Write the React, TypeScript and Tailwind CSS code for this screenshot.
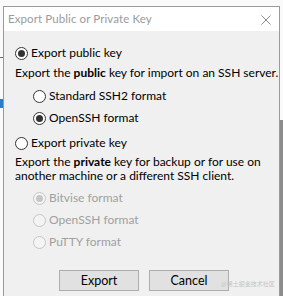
import type { ReactNode } from "react";

type RadioProps = {
  checked?: boolean;
  disabled?: boolean;
  children: ReactNode;
};

function Radio({ checked = false, disabled = false, children }: RadioProps) {
  return (
    <div className="flex h-[18px] items-center">
      <span
        className={
          disabled
            ? "flex h-[13px] w-[13px] shrink-0 items-center justify-center rounded-full border border-[#c6c6c6] bg-[#f4f4f4]"
            : "flex h-[13px] w-[13px] shrink-0 items-center justify-center rounded-full border border-[#333333] bg-white"
        }
      >
        {checked && (
          <span
            className={
              disabled
                ? "h-[7px] w-[7px] rounded-full bg-[#c6c6c6]"
                : "h-[7px] w-[7px] rounded-full bg-[#333333]"
            }
          />
        )}
      </span>
      <span
        className={
          disabled ? "ml-[3px] text-[#a0a0a0]" : "ml-[3px] text-black"
        }
      >
        {children}
      </span>
    </div>
  );
}

export default function App() {
  return (
    <div
      className="relative h-[296px] w-[283px] overflow-hidden bg-[#fafafa] pl-[3px] pt-[6px] text-[12px] leading-[18px]"
      style={{ fontFamily: 'Lato, "Liberation Sans", sans-serif' }}
    >
      {/* bits of the windows behind */}
      <div className="absolute left-0 top-[57px] h-px w-[3px] bg-[#6a6a6a]" />
      <div className="absolute left-0 top-[99px] h-[9px] w-[3px] bg-[#2a7ad2]" />
      <div className="absolute right-0 top-[120px] h-[176px] w-[3px] bg-[#8c8c8c]" />

      <div className="h-[290px] w-[277px] border border-b-0 border-[#9a9a9a] bg-[#f0f0f0]">
        {/* title bar */}
        <div className="flex h-[24px] items-center justify-between bg-white pl-[4px] pr-[8px]">
          <span className="text-[11.5px] tracking-[0.1px] text-[#9b9b9b]">
            Export Public or Private Key
          </span>
          <svg width="10" height="10" viewBox="0 0 10 10" className="mt-px">
            <path d="M0.5 0.5 L9.5 9.5 M9.5 0.5 L0.5 9.5" stroke="#8a8a8a" strokeWidth="1" />
          </svg>
        </div>

        {/* body */}
        <div className="pl-[11px] pt-[13px]">
          <Radio checked>Export public key</Radio>
          <p className="mt-[2px] h-[18px] whitespace-nowrap">
            Export the <b>public</b> key for import on an SSH server.
          </p>
          <div className="mt-[5px] flex flex-col gap-[4px] pl-[18px]">
            <Radio>Standard SSH2 format</Radio>
            <Radio checked>OpenSSH format</Radio>
          </div>

          <div className="mt-[7px]">
            <Radio>Export private key</Radio>
          </div>
          <p className="mt-[3px] whitespace-nowrap leading-[14px]">
            Export the <b>private</b> key for backup or for use on
            <br />
            another machine or a different SSH client.
          </p>
          <div className="mt-[6px] flex flex-col gap-[4px] pl-[18px]">
            <Radio checked disabled>
              Bitvise format
            </Radio>
            <Radio disabled>OpenSSH format</Radio>
            <Radio disabled>PuTTY format</Radio>
          </div>
        </div>

        {/* buttons */}
        <div className="mt-[19px] flex gap-[10px] pl-[55px]">
          <button className="h-[21px] w-[80px] border border-[#adadad] bg-[#e1e1e1] text-[12.5px] leading-[19px] text-black">
            Export
          </button>
          <button className="h-[21px] w-[80px] border border-[#adadad] bg-[#e1e1e1] text-[12.5px] leading-[19px] text-black">
            Cancel
          </button>
        </div>
      </div>

      <div
        className="absolute left-[221px] top-[280px] whitespace-nowrap text-[6px] leading-[8px] text-[#c4c4c4]"
        style={{ fontFamily: '"Noto Sans CJK SC", sans-serif' }}
      >
        @稀土掘金技术社区
      </div>
    </div>
  );
}
